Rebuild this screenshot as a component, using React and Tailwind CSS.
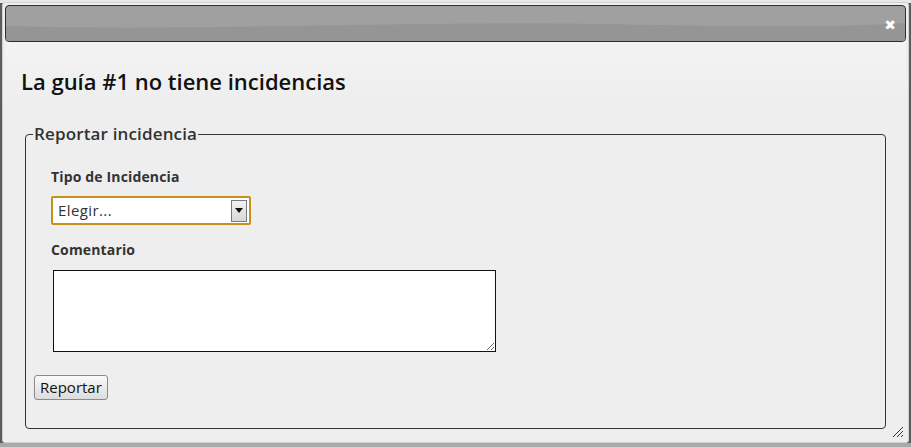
import React from "react";

export default function App() {
  return (
    <div className="relative h-[447px] w-[911px] overflow-hidden bg-[#5c5c5c]" style={{ fontFamily: '"Open Sans", "DejaVu Sans", sans-serif' }}>
      <div className="absolute left-0 right-0 top-0 h-[3px] bg-[#e8e8e8]" />
      <div className="absolute bottom-0 left-0 right-0 h-[4px] bg-[#a9a9a9]" />
      <div className="relative ml-[2px] mt-[2px] flex h-[441px] w-[907px] flex-col rounded-[3px] border border-[#d0d0d0] bg-[#eeeeee] p-[2px]">
        {/* title bar */}
        <div className="relative h-[37px] w-full shrink-0 overflow-hidden rounded-[4px] border border-[#2e2e2e] bg-[#a0a0a0]">
          <svg className="absolute inset-0 h-full w-full" viewBox="0 0 900 35" preserveAspectRatio="none">
            <path d="M0 20 C 200 26, 400 14, 600 18 S 850 20, 900 17 L900 35 L0 35 Z" fill="#959595" />
          </svg>
          <div className="absolute right-[9px] top-[12px] text-[14px] font-bold leading-none text-white">✖</div>
        </div>
        <div className="flex flex-1 flex-col bg-gradient-to-b from-[#f3f3f3] to-[#eeeeee] to-[60px] px-[16px]">
          <h1 className="mt-[24px] text-[22px] font-semibold leading-[30px] text-[#111]">La guía #1 no tiene incidencias</h1>
          <fieldset className="mb-[11px] ml-[4px] mr-[4px] mt-[27px] flex-1 rounded-[4px] border border-[#333] px-[7px]">
            <legend className="px-[1px] text-[17px] font-semibold leading-[22px] tracking-[0.15px] text-[#333]">Reportar incidencia</legend>
            <div className="ml-[18px] mt-[23px] text-[14px] font-bold leading-[18px] tracking-[0.15px] text-[#333]">Tipo de Incidencia</div>
            <div className="ml-[18px] mt-[10px] flex h-[29px] w-[200px] items-center rounded-[2px] border-2 border-[#c9901e] bg-white pl-[5px] pr-[2px]">
              <span className="flex-1 text-[15px] tracking-[0.4px] text-[#333]">Elegir...</span>
              <span className="flex h-[22px] w-[16px] items-center justify-center border border-[#7a7a7a] bg-gradient-to-b from-[#f2f2f2] to-[#d8d8d8]">
                <svg width="8" height="5" viewBox="0 0 8 5"><path d="M0 0 H8 L4 5 Z" fill="#111" /></svg>
              </span>
            </div>
            <div className="ml-[18px] mt-[16px] text-[14px] font-bold leading-[18px] tracking-[0.15px] text-[#333]">Comentario</div>
            <textarea className="ml-[20px] mt-[11px] block h-[82px] w-[443px] border border-[#111] bg-white" />
            <button className="ml-[1px] mt-[23px] h-[25px] rounded-[3px] border border-[#8a8a8a] bg-gradient-to-b from-[#fafafa] to-[#dcdcdc] px-[5px] text-[15px] leading-none text-[#111]">Reportar</button>
          </fieldset>
        </div>
        <svg className="absolute bottom-[4px] right-[4px]" width="12" height="12" viewBox="0 0 12 12">
          <path d="M11 1 L1 11 M11 5 L5 11 M11 9 L9 11" stroke="#333" strokeWidth="1" />
        </svg>
      </div>
    </div>
  );
}
